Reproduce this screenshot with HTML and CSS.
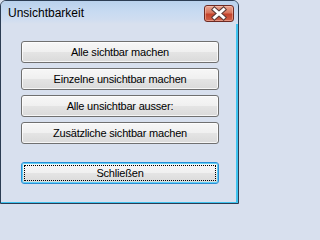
FILE: index.html
```html
<!DOCTYPE html>
<html lang="de">
<head>
<meta charset="utf-8">
<title>Unsichtbarkeit</title>
<link rel="stylesheet" href="styles.css">
</head>
<body>
<div class="window">
  <div class="titlebar">
    <span class="title">Unsichtbarkeit</span>
    <span class="close">
      <svg width="30" height="17" viewBox="0 0 30 17">
        <path d="M10.5 4.5 L19.5 12.5 M19.5 4.5 L10.5 12.5" stroke="#5a3a36" stroke-width="5" stroke-linecap="square" fill="none"/>
        <path d="M10.5 4.5 L19.5 12.5 M19.5 4.5 L10.5 12.5" stroke="#ffffff" stroke-width="3" stroke-linecap="square" fill="none"/>
      </svg>
    </span>
  </div>
  <div class="client">
    <button class="btn">Alle sichtbar machen</button>
    <button class="btn">Einzelne unsichtbar machen</button>
    <button class="btn">Alle unsichtbar ausser:</button>
    <button class="btn">Zusätzliche sichtbar machen</button>
    <button class="btn btn-default">Schließen</button>
  </div>
</div>
</body>
</html>
```

FILE: styles.css
```css
html {
  background: #d8e0ee;
}
html, body {
  margin: 0;
  padding: 0;
}
body {
  width: 239px;
  height: 204px;
  overflow: hidden;
  background: #d8e0ee;
}
.window {
  box-sizing: border-box;
  width: 239px;
  height: 204px;
  border: 1px solid #2b3c52;
  border-radius: 6px 6px 0 0;
  background: #d8e0ee;
  box-shadow: inset -2px -1px 0 #3fc3ef;
  display: flex;
  flex-direction: column;
  font-family: "Liberation Sans", Arial, sans-serif;
}
.titlebar {
  height: 23px;
  box-sizing: border-box;
  padding: 4px 4px 0 7px;
  display: flex;
  justify-content: space-between;
  align-items: flex-start;
  background: linear-gradient(#b9d1ec 0%, #c7daf1 45%, #cfddf0 80%, #d8e0ee 100%);
  border-radius: 5px 5px 0 0;
}
.title {
  font-size: 12px;
  line-height: 17px;
  color: #000;
}
.close {
  display: block;
  width: 30px;
  height: 17px;
  box-sizing: border-box;
  border: 1px solid #6e2a22;
  border-radius: 3px;
  background: linear-gradient(#e9a490 0%, #d8765e 45%, #c4432b 55%, #d0624a 100%);
  box-shadow: inset 0 0 0 1px rgba(255, 210, 195, 0.45);
  overflow: hidden;
}
.close svg {
  display: block;
  margin: -1px 0 0 -1px;
}
.client {
  display: flex;
  flex-direction: column;
  gap: 5px;
  padding: 17px 0 0 20px;
}
.btn {
  position: relative;
  width: 198px;
  height: 22px;
  box-sizing: border-box;
  margin: 0;
  padding: 0;
  border: 1px solid #707070;
  border-radius: 3px;
  background: linear-gradient(#f7f7f7 0%, #f0f0f0 48%, #e4e4e4 52%, #dadada 100%);
  box-shadow: inset 0 0 0 1px rgba(255, 255, 255, 0.75);
  font-family: "Liberation Sans", Arial, sans-serif;
  font-size: 11px;
  letter-spacing: -0.2px;
  color: #000;
  text-align: center;
  line-height: 18px;
}
.btn-default {
  margin-top: 13px;
  border-color: #2b8ed6;
  box-shadow: inset 0 0 0 1px #5fd0f6;
}
.btn-default::after {
  content: "";
  position: absolute;
  left: 2px;
  top: 2px;
  right: 2px;
  bottom: 2px;
  border: 1px dotted #000;
}
```
